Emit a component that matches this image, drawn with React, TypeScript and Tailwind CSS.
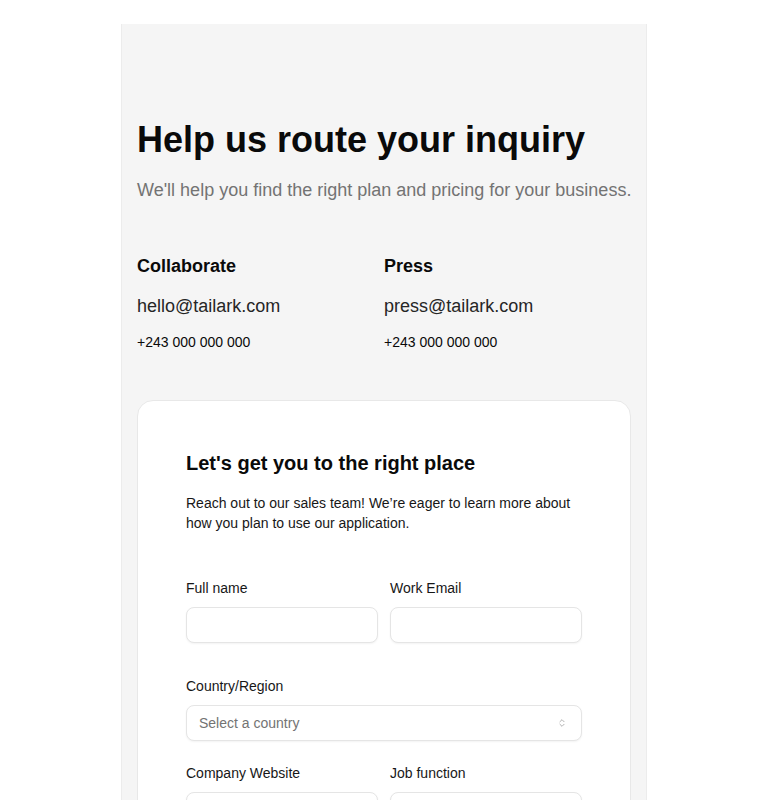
import React from "react";
import { ChevronsUpDown } from "lucide-react";

const contacts = [
  { title: "Collaborate", email: "hello@tailark.com", phone: "+243 000 000 000" },
  { title: "Press", email: "press@tailark.com", phone: "+243 000 000 000" },
];

function Field({ label, id, type = "text" }: { label: string; id: string; type?: string }) {
  return (
    <div>
      <label htmlFor={id} className="block text-sm leading-5 text-[#171717]">
        {label}
      </label>
      <input
        id={id}
        type={type}
        className="mt-[9px] block h-9 w-full rounded-lg border border-[#e5e5e5] bg-white px-3 text-sm shadow-xs outline-none"
      />
    </div>
  );
}

export default function App() {
  return (
    <div className="min-h-screen bg-white pt-6 font-['Liberation_Sans',Arial,sans-serif]">
      <div className="mx-auto w-[526px] border-x border-[#ececec] bg-[#f5f5f5] px-[15px] pt-24 pb-24">
        <h1 className="text-4xl leading-10 font-bold text-[#0a0a0a]">Help us route your inquiry</h1>
        <p className="mt-4 whitespace-nowrap text-lg leading-7 text-[#737373]">
          We'll help you find the right plan and pricing for your business.
        </p>

        {/* Contacts */}
        <div className="mt-12 grid grid-cols-2">
          {contacts.map((c) => (
            <div key={c.title}>
              <h2 className="text-lg leading-7 font-bold text-[#0a0a0a]">{c.title}</h2>
              <p className="mt-3 text-lg leading-7 text-[#262626]">{c.email}</p>
              <p className="mt-3 text-sm leading-5 text-[#0a0a0a]">{c.phone}</p>
            </div>
          ))}
        </div>

        {/* Form card */}
        <div className="mt-12 rounded-2xl border border-[#e8e8e8] bg-white p-12">
          <h3 className="text-xl leading-7 font-bold text-[#0a0a0a]">Let's get you to the right place</h3>
          <p className="mt-4 text-sm leading-5 text-[#171717]">
            Reach out to our sales team! We’re eager to learn more about how you plan to use our application.
          </p>

          <form className="mt-[45px]" onSubmit={(e) => e.preventDefault()}>
            <div className="grid grid-cols-2 gap-3">
              <Field label="Full name" id="name" />
              <Field label="Work Email" id="email" type="email" />
            </div>

            <div className="mt-[33px]">
              <label htmlFor="country" className="block text-sm leading-5 text-[#171717]">
                Country/Region
              </label>
              <div className="relative mt-[9px]">
                <select
                  id="country"
                  defaultValue=""
                  className="block h-9 w-full appearance-none rounded-lg border border-[#e5e5e5] bg-white pr-8 pl-3 text-sm text-[#737373] shadow-xs outline-none"
                >
                  <option value="" disabled>
                    Select a country
                  </option>
                  <option>United States</option>
                  <option>DR Congo</option>
                </select>
                <ChevronsUpDown className="pointer-events-none absolute top-1/2 right-[15px] h-2.5 w-2.5 -translate-y-1/2 text-[#a3a3a3]" />
              </div>
            </div>

            <div className="mt-[22px] grid grid-cols-2 gap-3">
              <Field label="Company Website" id="website" />
              <Field label="Job function" id="job" />
            </div>

            <div className="mt-[22px]">
              <label htmlFor="msg" className="block text-sm leading-5 text-[#171717]">
                Message
              </label>
              <textarea
                id="msg"
                rows={4}
                className="mt-[9px] block w-full rounded-lg border border-[#e5e5e5] bg-white px-3 py-2 text-sm shadow-xs outline-none"
              />
            </div>

            <button className="mt-6 h-9 w-full rounded-lg bg-[#171717] text-sm font-medium text-white">
              Submit
            </button>
          </form>
        </div>
      </div>
    </div>
  );
}
